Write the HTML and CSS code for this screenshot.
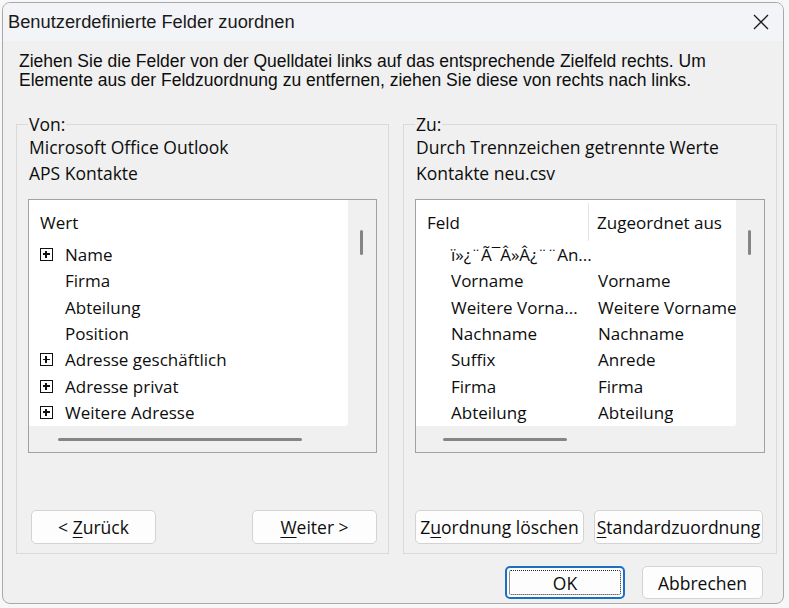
FILE: index.html
```html
<!DOCTYPE html>
<html lang="de">
<head>
    <meta charset="UTF-8">
    <meta name="viewport" content="width=device-width, initial-scale=1.0">
    <title>Benutzerdefinierte Felder zuordnen</title>
    <link rel="stylesheet" href="styles.css">
</head>
<body>
    <div class="dialog">
        <div class="titlebar">
            <span class="title">Benutzerdefinierte Felder zuordnen</span>
            <button class="close" title="Schließen">
                <svg width="16" height="16" viewBox="0 0 16 16">
                    <path d="M1 1 L15 15 M15 1 L1 15" stroke="#1a1a1a" stroke-width="1.3" fill="none"/>
                </svg>
            </button>
        </div>

        <div class="content">
            <p class="intro">Ziehen Sie die Felder von der Quelldatei links auf das entsprechende Zielfeld rechts. Um<br>Elemente aus der Feldzuordnung zu entfernen, ziehen Sie diese von rechts nach links.</p>

            <div class="groups">
                <fieldset class="group">
                    <legend>Von:</legend>
                    <div class="source">Microsoft Office Outlook</div>
                    <div class="source">APS Kontakte</div>

                    <div class="listbox">
                        <div class="list-area">
                            <div class="list-head"><span class="col">Wert</span></div>
                            <div class="row"><span class="expander"></span>Name</div>
                            <div class="row indent">Firma</div>
                            <div class="row indent">Abteilung</div>
                            <div class="row indent">Position</div>
                            <div class="row"><span class="expander"></span>Adresse geschäftlich</div>
                            <div class="row"><span class="expander"></span>Adresse privat</div>
                            <div class="row"><span class="expander"></span>Weitere Adresse</div>
                        </div>
                        <div class="vscroll"><span class="vthumb"></span></div>
                        <div class="hscroll"><span class="hthumb thumb-left"></span></div>
                        <div class="corner"></div>
                    </div>

                    <div class="group-buttons">
                        <button class="btn btn-nav">&lt; <u>Z</u>urück</button>
                        <button class="btn btn-nav"><u>W</u>eiter &gt;</button>
                    </div>
                </fieldset>

                <fieldset class="group">
                    <legend>Zu:</legend>
                    <div class="source">Durch Trennzeichen getrennte Werte</div>
                    <div class="source">Kontakte neu.csv</div>

                    <div class="listbox">
                        <div class="list-area">
                            <div class="list-head">
                                <span class="col col-field">Feld</span>
                                <span class="col col-from">Zugeordnet aus</span>
                            </div>
                            <div class="map-row"><span class="cell-field">ï»¿¨Ã¯Â»Â¿¨¨An...</span><span class="cell-from"></span></div>
                            <div class="map-row"><span class="cell-field">Vorname</span><span class="cell-from">Vorname</span></div>
                            <div class="map-row"><span class="cell-field">Weitere Vorna...</span><span class="cell-from">Weitere Vorname</span></div>
                            <div class="map-row"><span class="cell-field">Nachname</span><span class="cell-from">Nachname</span></div>
                            <div class="map-row"><span class="cell-field">Suffix</span><span class="cell-from">Anrede</span></div>
                            <div class="map-row"><span class="cell-field">Firma</span><span class="cell-from">Firma</span></div>
                            <div class="map-row"><span class="cell-field">Abteilung</span><span class="cell-from">Abteilung</span></div>
                        </div>
                        <div class="vscroll"><span class="vthumb"></span></div>
                        <div class="hscroll"><span class="hthumb thumb-right"></span></div>
                        <div class="corner"></div>
                    </div>

                    <div class="group-buttons map-buttons">
                        <button class="btn btn-map">Z<u>u</u>ordnung löschen</button>
                        <button class="btn btn-map"><u>S</u>tandardzuordnung</button>
                    </div>
                </fieldset>
            </div>

            <div class="dialog-buttons">
                <button class="btn btn-main btn-default"><span class="focus">OK</span></button>
                <button class="btn btn-main">Abbrechen</button>
            </div>
        </div>
    </div>
</body>
</html>
```

FILE: styles.css
```css
* {
    margin: 0;
    padding: 0;
    box-sizing: border-box;
}

body {
    background: #f7f7f7;
    font-family: "Open Sans", "Noto Sans", sans-serif;
    color: #0d0d0d;
    width: 789px;
    height: 608px;
    overflow: hidden;
}

.dialog {
    margin: 2px 0 0 2px;
    width: 782px;
    height: 602px;
    border: 1px solid #a9a9a9;
    border-radius: 8px;
    background: #f0f0f0;
    overflow: hidden;
    display: flex;
    flex-direction: column;
}

.titlebar {
    height: 38px;
    background: #f3f4f7;
    display: flex;
    align-items: center;
    justify-content: space-between;
    padding: 0 10px 0 5px;
    flex-shrink: 0;
}

.title {
    font-family: "Liberation Sans", Arial, sans-serif;
    font-size: 18.3px;
    color: #1a1a1a;
}

.close {
    background: none;
    border: none;
    width: 24px;
    height: 24px;
    display: flex;
    align-items: center;
    justify-content: center;
}

.content {
    flex: 1;
    display: flex;
    flex-direction: column;
    padding: 0 20px 0 13px;
}

.intro {
    font-family: "Liberation Sans", Arial, sans-serif;
    font-size: 17.5px;
    line-height: 19px;
    padding: 11px 0 0 3px;
    height: 73px;
}

.groups {
    display: grid;
    grid-template-columns: 373px 374px;
    gap: 14px;
}

.group {
    border: 1px solid #dadada;
    padding: 0 11px 9px 11px;
    min-width: 0;
    height: 440px;
}

.group legend {
    font-size: 17.5px;
    line-height: 20px;
    padding: 0 1px;
}

.source {
    font-size: 17.5px;
    line-height: 26px;
    padding-left: 1px;
    white-space: nowrap;
}

.listbox {
    margin-top: 13px;
    height: 254px;
    border: 1px solid #a2a2a2;
    background: #f0f0f0;
    display: grid;
    grid-template-columns: 1fr 28px;
    grid-template-rows: 226px 26px;
}

.list-area {
    background: #fff;
    overflow: hidden;
    border-radius: 0 0 3px 0;
    font-size: 17px;
}

.list-head {
    height: 41px;
    display: flex;
    padding-top: 3px;
}

.col {
    display: flex;
    align-items: center;
    padding-left: 11px;
    white-space: nowrap;
}

.col-field {
    width: 173px;
    border-right: 1px solid #e5e5e5;
}

.col-from {
    padding-left: 8px;
}

.row {
    height: 26.33px;
    display: flex;
    align-items: center;
    padding-left: 11px;
    padding-top: 1px;
    white-space: nowrap;
}

.row.indent {
    padding-left: 36px;
}

.expander {
    width: 13px;
    height: 13px;
    border: 1.5px solid #111;
    margin-right: 12px;
    position: relative;
    flex-shrink: 0;
}

.expander::before,
.expander::after {
    content: "";
    position: absolute;
    background: #111;
}

.expander::before {
    left: 2px;
    right: 2px;
    top: 4.25px;
    height: 1.5px;
}

.expander::after {
    top: 2px;
    bottom: 2px;
    left: 4.25px;
    width: 1.5px;
}

.map-row {
    height: 26.33px;
    display: flex;
    align-items: center;
    padding-top: 1px;
    white-space: nowrap;
}

.cell-field {
    width: 182px;
    padding-left: 35px;
    overflow: hidden;
    flex-shrink: 0;
}

.cell-from {
    overflow: hidden;
}

.vscroll {
    display: flex;
    justify-content: center;
    padding-top: 30px;
    padding-right: 2px;
}

.vthumb {
    width: 3px;
    height: 25px;
    border-radius: 2px;
    background: #858585;
}

.hscroll {
    display: flex;
    align-items: center;
}

.hthumb {
    height: 3px;
    border-radius: 2px;
    background: #858585;
}

.thumb-left {
    margin-left: 29px;
    width: 244px;
}

.thumb-right {
    margin-left: 27px;
    width: 124px;
}

.group-buttons {
    display: flex;
    justify-content: space-between;
    margin-top: 57px;
}

.map-buttons {
    justify-content: flex-start;
    gap: 10px;
    padding-left: 0;
}

.btn {
    font-family: "Open Sans", "Noto Sans", sans-serif;
    font-size: 17.5px;
    color: #0d0d0d;
    background: #fdfdfd;
    border: 1px solid #d3d3d3;
    border-radius: 5px;
    height: 34px;
    padding: 0;
}

.btn u {
    text-underline-offset: 3px;
}

.btn-nav {
    width: 125px;
}

.group-buttons .btn-nav:first-child {
    margin-left: 3px;
}

.btn-map {
    width: 169px;
}

.dialog-buttons {
    display: flex;
    justify-content: flex-end;
    gap: 17px;
    margin-top: 12px;
}

.btn-main {
    width: 121px;
    height: 33px;
}

.btn-default {
    width: 120px;
    border: 2px solid #1a6fc4;
    padding: 2px;
}

.focus {
    display: flex;
    align-items: center;
    justify-content: center;
    height: 100%;
    border: 1px dotted #222;
    border-radius: 2px;
}
```
